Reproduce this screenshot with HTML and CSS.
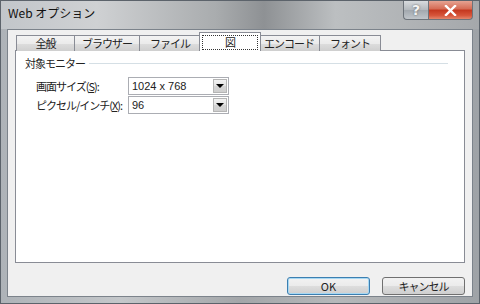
FILE: index.html
```html
<html lang="ja">
<head>
    <meta charset="UTF-8">
    <title>Web オプション</title>
    <link rel="stylesheet" href="styles.css">
</head>
<body>

<div class="window">
    <div class="titlebar">
        <div class="title">Web オプション</div>
        <div class="caption-buttons">
            <div class="cap help">?</div>
            <div class="cap close">
                <svg width="13" height="11" viewBox="0 0 13 11">
                    <path d="M2 1 L11 10 M11 1 L2 10" stroke="#fff" stroke-width="2.4" stroke-linecap="square"/>
                </svg>
            </div>
        </div>
    </div>

    <div class="client">
        <div class="tabs">
            <div class="tab t1">全般</div>
            <div class="tab t2">ブラウザー</div>
            <div class="tab t3">ファイル</div>
            <div class="tab t4 selected"><span class="focus">図</span></div>
            <div class="tab t5">エンコード</div>
            <div class="tab t6">フォント</div>
        </div>
        <div class="panel">
            <div class="group">
                <span class="group-label">対象モニター</span>
                <span class="group-line"></span>
            </div>
            <div class="rows">
                <div class="row">
                    <label class="row-label">画面サイズ(<u>S</u>):</label>
                    <div class="combo">
                        <span class="combo-value">1024 x 768</span>
                        <span class="combo-btn"><span class="arrow"></span></span>
                    </div>
                </div>
                <div class="row">
                    <label class="row-label">ピクセル/インチ(<u>X</u>):</label>
                    <div class="combo">
                        <span class="combo-value">96</span>
                        <span class="combo-btn"><span class="arrow"></span></span>
                    </div>
                </div>
            </div>
        </div>
        <div class="buttons">
            <button class="btn default">OK</button>
            <button class="btn">キャンセル</button>
        </div>
    </div>
</div>

</body>
</html>
```

FILE: styles.css
```css
body {
    margin: 0;
    padding: 0;
    font-family: "Noto Sans CJK JP", "Noto Sans", sans-serif;
    font-size: 11px;
    letter-spacing: -1px;
    color: #222;
}
.window {
    width: 480px;
    height: 304px;
    box-sizing: border-box;
    padding: 0 6px 6px 6px;
    border: 1px solid #5c636b;
    background: linear-gradient(to right, #aeb3b8, #c4c7ca 25%, #a3a6a9 50%, #b5b8ba 70%, #9fa3a7);
    display: flex;
    flex-direction: column;
}
.titlebar {
    height: 28px;
    display: flex;
    justify-content: space-between;
    background: linear-gradient(to right, #c2c6ca, #cfd1d3 20%, #a9acae 45%, #8e9194 55%, #bcbfc1 70%, #a5a8ab);
    margin: 0 -6px;
    padding: 0 6px 0 7px;
}
.title {
    font-size: 12px;
    letter-spacing: 0;
    line-height: 24px;
    color: #111;
}
.caption-buttons {
    display: flex;
    height: 19px;
}
.cap {
    height: 18px;
    border: 1px solid #6d737a;
    border-top: none;
    display: flex;
    align-items: center;
    justify-content: center;
}
.help {
    width: 24px;
    border-radius: 0 0 0 4px;
    border-right: none;
    background: linear-gradient(#d8dbde, #b3b8bd 50%, #a2a8ae 51%, #c0c5ca);
    color: #f4f4f4;
    font-family: "DejaVu Sans", sans-serif;
    font-weight: bold;
    font-size: 14px;
    letter-spacing: 0;
    text-shadow: 0 0 2px #555;
}
.close {
    width: 43px;
    border-radius: 0 0 4px 0;
    background: linear-gradient(#e6a392, #d56a53 45%, #c4371e 50%, #d7553a 80%, #e3866c);
}
.client {
    flex: 1;
    background: #f0f0f0;
    border: 1px solid #7c838b;
    display: flex;
    flex-direction: column;
    padding: 3px 7px 0 7px;
}
.tabs {
    display: flex;
    align-items: flex-end;
    height: 18px;
    margin-left: 1px;
    margin-bottom: -1px;
    position: relative;
    z-index: 1;
}
.tab {
    height: 15px;
    line-height: 15px;
    text-align: center;
    border: 1px solid #898c95;
    border-bottom: none;
    margin-left: -1px;
    background: linear-gradient(#f3f3f3, #ebebeb 50%, #dddddd 51%, #cfcfcf);
    white-space: nowrap;
}
.t1 { width: 57px; margin-left: 0; }
.t2 { width: 64px; }
.t3 { width: 60px; }
.t4 { width: 60px; }
.t5 { width: 60px; }
.t6 { width: 60px; }
.tab.selected {
    height: 18px;
    background: #fff;
    margin-left: -2px;
    margin-right: -2px;
    position: relative;
    z-index: 2;
    display: flex;
    align-items: center;
    justify-content: center;
}
.focus {
    border: 1px dotted #333;
    width: 54px;
    height: 13px;
    line-height: 13px;
    display: block;
}
.panel {
    height: 206px;
    background: #fff;
    border: 1px solid #898c95;
    padding: 5px 9px 0 9px;
}
.group {
    display: flex;
    align-items: center;
    height: 14px;
}
.group-label {
    line-height: 14px;
}
.group-line {
    flex: 1;
    height: 0;
    border-top: 1px solid #d5dfe5;
    margin-left: 4px;
    margin-right: 7px;
}
.rows {
    display: flex;
    flex-direction: column;
    gap: 1px;
    margin-top: 7px;
    padding-left: 11px;
}
.row {
    display: flex;
    align-items: center;
    height: 18px;
}
.row-label {
    width: 92px;
    white-space: nowrap;
}
.combo {
    width: 99px;
    height: 16px;
    border: 1px solid #abadb3;
    background: #fff;
    display: flex;
    align-items: center;
    justify-content: space-between;
}
.combo-value {
    padding-left: 3px;
    font-family: "Liberation Sans", sans-serif;
    font-size: 11px;
    letter-spacing: 0;
}
.combo-btn {
    width: 14px;
    height: 14px;
    margin-right: 1px;
    border: 1px solid #b5b5b5;
    box-sizing: border-box;
    background: linear-gradient(#f2f2f2, #e3e3e3 50%, #d5d5d5 51%, #cfcfcf);
    display: flex;
    align-items: center;
    justify-content: center;
}
.arrow {
    width: 0;
    height: 0;
    border-left: 4px solid transparent;
    border-right: 4px solid transparent;
    border-top: 4px solid #000;
}
.buttons {
    display: flex;
    justify-content: flex-end;
    gap: 12px;
    margin-top: 14px;
}
.btn {
    width: 83px;
    height: 18px;
    padding: 0;
    font-family: "Noto Sans CJK JP", "Noto Sans", sans-serif;
    font-size: 11px;
    letter-spacing: -1px;
    line-height: 14px;
    color: #222;
    border: 1px solid #707070;
    border-radius: 3px;
    background: linear-gradient(#f2f2f2, #ebebeb 50%, #dddddd 51%, #cfcfcf);
}
.btn.default {
    letter-spacing: 0;
    border-color: #3c7fb1;
    box-shadow: inset 0 0 0 1px #a7d8f3;
}
```
